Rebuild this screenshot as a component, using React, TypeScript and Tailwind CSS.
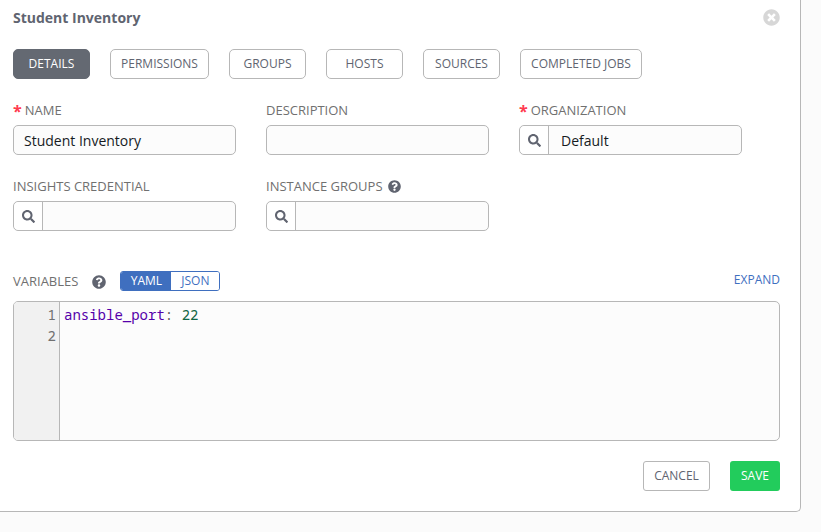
import { FaQuestionCircle, FaSearch, FaTimesCircle } from 'react-icons/fa';

const tabs = [
  { label: 'DETAILS', width: 'w-[77px]', active: true },
  { label: 'PERMISSIONS', width: 'w-[99px]' },
  { label: 'GROUPS', width: 'w-[77px]' },
  { label: 'HOSTS', width: 'w-[77px]' },
  { label: 'SOURCES', width: 'w-[77px]' },
  { label: 'COMPLETED JOBS', width: 'w-[122px]' },
];

function Label({ text, required, help }: { text: string; required?: boolean; help?: boolean }) {
  return (
    <div className="flex items-center h-[20px] text-[13px] text-[#707070] leading-none">
      {required && <span className="text-[#ff3b4e] text-[16px] font-bold mr-[3px] mt-[1px]">*</span>}
      <span>{text}</span>
      {help && <FaQuestionCircle className="ml-[5px] text-[13px] text-[#606470]" />}
    </div>
  );
}

function TextField({ value }: { value?: string }) {
  return (
    <div className="h-[30px] w-[223px] rounded-[5px] border border-[#b7b7b7] bg-[#fcfcfc] px-[10px] flex items-center text-[14px] text-[#161b1f]">
      {value}
    </div>
  );
}

function LookupField({ value }: { value?: string }) {
  return (
    <div className="h-[30px] w-[223px] rounded-[5px] border border-[#b7b7b7] bg-[#fcfcfc] flex items-center text-[14px] text-[#161b1f]">
      <div className="h-full w-[29px] shrink-0 flex items-center justify-center border-r border-[#b7b7b7] bg-white rounded-l-[5px]">
        <FaSearch className="text-[13px] text-[#606470]" />
      </div>
      {value && <span className="ml-[12px]">{value}</span>}
    </div>
  );
}

export default function App() {
  return (
    <div className="h-[532px] w-[821px] overflow-hidden bg-[#fbfbfb] font-['Open_Sans',sans-serif]">
      <div className="h-[512px] w-[801px] bg-white border-r border-b border-[#b7b7b7] rounded-br-[5px] pl-[13px] pr-[20px]">
        <div className="flex h-[49px] justify-between pt-[8px]">
          <h1 className="text-[14px] font-bold leading-[20px] text-[#606470]">Student Inventory</h1>
          <FaTimesCircle className="text-[17px] text-[#d7d7d7] mt-[1px]" />
        </div>

        <div className="flex gap-[20px]">
          {tabs.map((tab) => (
            <div
              key={tab.label}
              className={`h-[30px] ${tab.width} flex items-center justify-center rounded-[5px] border text-[12px] ${
                tab.active
                  ? 'border-[#646972] bg-[#646972] text-white'
                  : 'border-[#b7b7b7] bg-white text-[#606470]'
              }`}
            >
              {tab.label}
            </div>
          ))}
        </div>

        <div className="grid grid-cols-[223px_223px_223px] gap-x-[30px] mt-[21px]">
          <div>
            <Label text="NAME" required />
            <div className="mt-[5px]"><TextField value="Student Inventory" /></div>
          </div>
          <div>
            <Label text="DESCRIPTION" />
            <div className="mt-[5px]"><TextField /></div>
          </div>
          <div>
            <Label text="ORGANIZATION" required />
            <div className="mt-[5px]"><LookupField value="Default" /></div>
          </div>
          <div className="mt-[21px]">
            <Label text="INSIGHTS CREDENTIAL" />
            <div className="mt-[5px]"><LookupField /></div>
          </div>
          <div className="mt-[21px]">
            <Label text="INSTANCE GROUPS" help />
            <div className="mt-[5px]"><LookupField /></div>
          </div>
        </div>

        <div className="flex items-center h-[20px] mt-[40px] text-[12px] text-[#707070]">
          <span className="text-[13px] pt-[2px]">VARIABLES</span>
          <FaQuestionCircle className="ml-[14px] mt-[2px] text-[14px] text-[#606470]" />
          <div className="ml-[14px] flex h-[20px] w-[100px] rounded-[3px] border border-[#3f6fbf] overflow-hidden">
            <div className="w-[50px] flex items-center justify-center bg-[#3f6fbf] text-white">YAML</div>
            <div className="flex-1 flex items-center justify-center bg-white text-[#3f6fbf]">JSON</div>
          </div>
          <span className="ml-auto -mt-[2px] text-[#3f6fbf]">EXPAND</span>
        </div>

        <div className="mt-[10px] flex h-[140px] w-[767px] overflow-hidden rounded-[5px] border border-[#b7b7b7] bg-[#fcfcfc] font-['Noto_Sans_Mono','DejaVu_Sans_Mono',monospace] text-[14px] leading-[21px]">
          <div className="w-[46px] shrink-0 border-r border-[#b7b7b7] bg-[#f1f1f1] pr-[3px] pt-[2px] text-right text-[#707070]">
            <div>1</div>
            <div>2</div>
          </div>
          <div className="pl-[4px] pt-[2px]">
            <span className="text-[#5500aa]">ansible_port</span>
            <span className="text-[#555555]">: </span>
            <span className="text-[#116644]">22</span>
          </div>
        </div>

        <div className="mt-[20px] flex w-[767px] justify-end gap-[20px] text-[12px]">
          <div className="flex h-[30px] w-[67px] items-center justify-center rounded-[3px] border border-[#b7b7b7] bg-white text-[#606470]">CANCEL</div>
          <div className="flex h-[30px] w-[50px] items-center justify-center rounded-[3px] bg-[#22cc5c] text-white">SAVE</div>
        </div>
      </div>
    </div>
  );
}
